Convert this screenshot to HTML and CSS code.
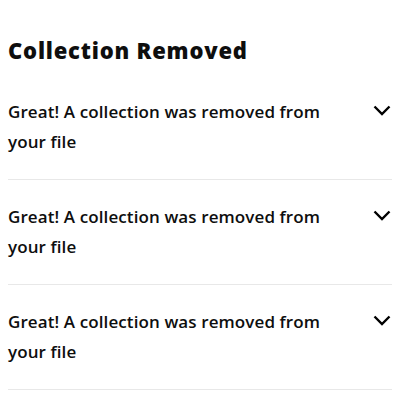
FILE: index.html
```html
<!DOCTYPE html>
<html>
<head>
<meta charset="utf-8">
<link rel="stylesheet" href="styles.css">
</head>
<body>
<div class="page">
  <h1 class="title">Collection Removed</h1>
  <div class="list">
    <div class="item">
      <div class="text">Great! A collection was removed from your file</div>
      <svg class="chev" width="20" height="20" viewBox="0 0 20 20"><path d="M2.5 6.5 L10 14 L17.5 6.5" fill="none" stroke="#000" stroke-width="2.4"/></svg>
    </div>
    <div class="item">
      <div class="text">Great! A collection was removed from your file</div>
      <svg class="chev" width="20" height="20" viewBox="0 0 20 20"><path d="M2.5 6.5 L10 14 L17.5 6.5" fill="none" stroke="#000" stroke-width="2.4"/></svg>
    </div>
    <div class="item">
      <div class="text">Great! A collection was removed from your file</div>
      <svg class="chev" width="20" height="20" viewBox="0 0 20 20"><path d="M2.5 6.5 L10 14 L17.5 6.5" fill="none" stroke="#000" stroke-width="2.4"/></svg>
    </div>
  </div>
</div>
</body>
</html>
```
FILE: styles.css
```css
html, body { margin: 0; padding: 0; background: #fff; }
body { font-family: "Open Sans", "Liberation Sans", sans-serif; color: #0e0e0e; }
.page { padding: 0 8px; }
.title { margin: 0; padding-top: 34px; font-size: 22px; line-height: 32px; font-weight: 800; letter-spacing: 0.8px; height: 41px; }
.item { display: flex; align-items: flex-start; justify-content: space-between; padding: 22px 0; border-bottom: 1px solid #e8e8e8; }
.text { font-size: 17px; line-height: 30px; font-weight: 600; letter-spacing: 0.1px; width: 340px; }
.chev { margin-top: 3px; margin-right: 0; flex: none; }
```
